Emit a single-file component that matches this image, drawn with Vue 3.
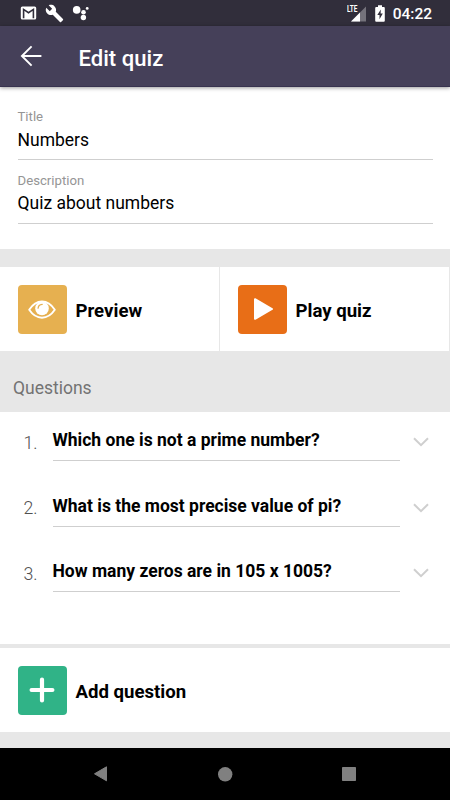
<script setup>
const fields = [
  { label: 'Title', value: 'Numbers' },
  { label: 'Description', value: 'Quiz about numbers' },
]
const questions = [
  'Which one is not a prime number?',
  'What is the most precise value of pi?',
  'How many zeros are in 105 x 1005?',
]
</script>

<template>
  <div class="screen">
    <div class="status">
      <div class="status-left">
        <svg width="17" height="14" viewBox="0 0 17 14">
          <rect x="0.8" y="0.5" width="15.4" height="13" rx="1.6" fill="#fff" />
          <path d="M3.6 12.2V3.4L8.5 6.7L13.4 3.4V12.2" fill="none" stroke="#312e3b" stroke-width="1.6" />
        </svg>
        <svg class="wrench" width="19" height="19" viewBox="0 0 24 24">
          <path d="M22.7 19l-9.1-9.1c.9-2.3.4-5-1.5-6.9-2-2-5-2.4-7.4-1.3L9 6 6 9 1.6 4.7C.4 7.1.9 10.1 2.9 12.1c1.9 1.9 4.6 2.4 6.9 1.5l9.1 9.1c.4.4 1 .4 1.4 0l2.3-2.3c.5-.4.5-1.1.1-1.4z" fill="#fff" />
        </svg>
        <svg class="dots" width="18" height="16" viewBox="0 0 18 16">
          <g fill="#fff">
            <circle cx="4.7" cy="4.9" r="3.8" />
            <circle cx="11.5" cy="7.3" r="2.3" />
            <circle cx="15.2" cy="3.4" r="1.4" />
            <circle cx="11.4" cy="12.5" r="2.7" />
          </g>
        </svg>
      </div>
      <div class="status-right">
        <div class="signal">
          <svg width="20" height="18" viewBox="0 0 20 18">
            <path d="M20 1.5V16.5H5z" fill="#fff" opacity=".33" />
            <path d="M14 7.5V16.5H5z" fill="#fff" />
          </svg>
          <span class="lte">LTE</span>
        </div>
        <svg class="battery" width="10" height="17" viewBox="0 0 10 17">
          <path d="M3 0.3H7V2H8.8Q9.8 2 9.8 3V15.7Q9.8 16.7 8.8 16.7H1.2Q.2 16.7 .2 15.7V3Q.2 2 1.2 2H3z" fill="#fff" />
          <path d="M5.8 4.6L2.3 10H4.5V14.2L7.8 8.6H5.6z" fill="#312e3b" />
        </svg>
        <span class="clock">04:22</span>
      </div>
    </div>

    <header class="appbar">
      <svg width="23" height="22" viewBox="0 0 23 22">
        <path d="M21.4 11H2M11.6 1.3L1.9 11L11.6 20.7" fill="none" stroke="#fff" stroke-width="1.9" />
      </svg>
      <h1>Edit quiz</h1>
    </header>

    <section class="form">
      <div v-for="f in fields" :key="f.label" class="field">
        <div class="label">{{ f.label }}</div>
        <div class="value">{{ f.value }}</div>
      </div>
    </section>

    <section class="actions">
      <div class="action">
        <div class="tile yellow">
          <svg width="28" height="20" viewBox="0 0 28 20">
            <path d="M1.2 10.8Q6.5 2.5 14 2.5T26.8 10.8Q21.5 18.7 14 18.7T1.2 10.8z" fill="none" stroke="#fff" stroke-width="1.9" stroke-linejoin="round" />
            <circle cx="14" cy="9.4" r="6.8" fill="#fff" />
            <path d="M10.1 9.2Q10.3 5.8 14.2 5.4" fill="none" stroke="#e6b050" stroke-width="1.3" stroke-linecap="round" />
          </svg>
        </div>
        <span>Preview</span>
      </div>
      <div class="action">
        <div class="tile orange">
          <svg width="22" height="24" viewBox="0 0 22 24">
            <path d="M4 2.2L21 12L4 21.8z" fill="#fff" stroke="#fff" stroke-width="2" stroke-linejoin="round" />
          </svg>
        </div>
        <span>Play quiz</span>
      </div>
    </section>

    <h2>Questions</h2>

    <section class="questions">
      <div v-for="(q, i) in questions" :key="q" class="row">
        <span class="num">{{ i + 1 }}.</span>
        <div class="question">{{ q }}</div>
        <svg width="16" height="10" viewBox="0 0 16 10">
          <path d="M1 1.2L8 8.2L15 1.2" fill="none" stroke="#cfcfcf" stroke-width="2" />
        </svg>
      </div>
    </section>

    <section class="add">
      <div class="tile green">
        <svg width="26" height="26" viewBox="0 0 26 26">
          <path d="M13 2.6V23.4M2.6 13H23.4" stroke="#fff" stroke-width="4.2" stroke-linecap="round" />
        </svg>
      </div>
      <span>Add question</span>
    </section>

    <nav class="nav">
      <svg width="14" height="16" viewBox="0 0 14 16"><path d="M12.5 .8V14.8L.5 7.8z" fill="#808080" stroke="#808080" stroke-linejoin="round" /></svg>
      <svg width="15" height="15" viewBox="0 0 15 15"><circle cx="7.2" cy="7.3" r="7.2" fill="#808080" /></svg>
      <svg width="14" height="14" viewBox="0 0 14 14"><rect width="14" height="14" rx=".7" fill="#808080" /></svg>
    </nav>
  </div>
</template>

<style>
body {
  margin: 0;
}
</style>

<style scoped>
.screen {
  box-sizing: border-box;
  width: 450px;
  height: 800px;
  overflow: hidden;
  display: flex;
  flex-direction: column;
  background: #e7e7e7;
  font-family: Roboto, sans-serif;
  color: #000;
}
.screen svg {
  display: block;
  flex: none;
}
.status {
  flex: none;
  height: 26px;
  background: #312e3b;
  display: flex;
  justify-content: space-between;
  color: #fff;
}
.status-left {
  display: flex;
  align-items: center;
  padding-left: 20px;
}
.wrench {
  margin-left: 8px;
}
.dots {
  margin-left: 8px;
}
.status-right {
  display: flex;
  align-items: center;
  padding-right: 18px;
}
.signal {
  position: relative;
  margin-top: 1px;
}
.lte {
  position: absolute;
  left: 1px;
  top: 0;
  font-size: 9px;
  line-height: 9px;
  font-weight: 700;
  transform: scaleX(0.72);
  transform-origin: left;
}
.battery {
  margin-left: 9px;
}
.clock {
  margin-left: 8px;
  font-size: 15.5px;
  line-height: 20px;
  font-weight: 500;
  margin-top: 2px;
}
.appbar {
  flex: none;
  height: 61px;
  box-sizing: border-box;
  background: #454059;
  border-bottom: 1px solid #38334f;
  box-shadow: 0 1px 4px rgba(0, 0, 0, 0.4);
  position: relative;
  display: flex;
  align-items: center;
  padding-left: 19.5px;
  gap: 36px;
}
h1 {
  margin: 3px 0 0;
  font-size: 22.1px;
  line-height: 26px;
  font-weight: 500;
  color: #fff;
}
.form {
  flex: none;
  height: 162px;
  box-sizing: border-box;
  background: #fff;
  padding: 22px 17.5px 0 17.5px;
  display: flex;
  flex-direction: column;
  gap: 12.6px;
}
.field {
  border-bottom: 1px solid #cfcfcf;
}
.label {
  font-size: 13.2px;
  line-height: 16px;
  color: #959595;
}
.value {
  margin-top: 4.7px;
  font-size: 17.5px;
  line-height: 20px;
  padding-bottom: 9.3px;
}
.actions {
  flex: none;
  margin-top: 18px;
  height: 84px;
  display: grid;
  grid-template-columns: 219px 229px;
  column-gap: 1px;
}
.action,
.add {
  background: #fff;
  display: flex;
  align-items: center;
  gap: 9px;
  padding-left: 17.5px;
  font-size: 18.6px;
  line-height: 20px;
  font-weight: 700;
}
.action span,
.add span {
  margin-top: 4px;
}
.tile {
  width: 49px;
  height: 49px;
  border-radius: 4px;
  display: flex;
  align-items: center;
  justify-content: center;
}
.yellow {
  background: #e6b050;
}
.orange {
  background: #e86e17;
}
.green {
  background: #30b387;
}
h2 {
  flex: none;
  margin: 0;
  height: 61px;
  box-sizing: border-box;
  padding: 27px 0 0 13px;
  font-size: 17.5px;
  line-height: 20px;
  font-weight: 400;
  color: #737373;
}
.questions {
  flex: none;
  height: 232px;
  box-sizing: border-box;
  background: #fff;
  padding-top: 18px;
  display: flex;
  flex-direction: column;
  gap: 34.6px;
}
.row {
  height: 31px;
  display: grid;
  grid-template-columns: 29px 347px 16px;
  column-gap: 0;
  padding-left: 23.5px;
  align-items: start;
}
.num {
  margin-top: 2.5px;
  font-size: 17.8px;
  line-height: 20px;
  font-weight: 300;
  color: #505050;
}
.question {
  box-sizing: border-box;
  height: 31px;
  border-bottom: 1px solid #cfcfcf;
  font-size: 17.5px;
  line-height: 21px;
  font-weight: 700;
  white-space: nowrap;
}
.row svg {
  margin: 7px 0 0 13px;
}
.add {
  flex: none;
  margin-top: 4px;
  height: 84px;
}
.nav {
  flex: none;
  margin-top: 16px;
  height: 52px;
  background: #000;
  display: flex;
  align-items: center;
  justify-content: space-between;
  padding: 0 94px;
}
</style>
